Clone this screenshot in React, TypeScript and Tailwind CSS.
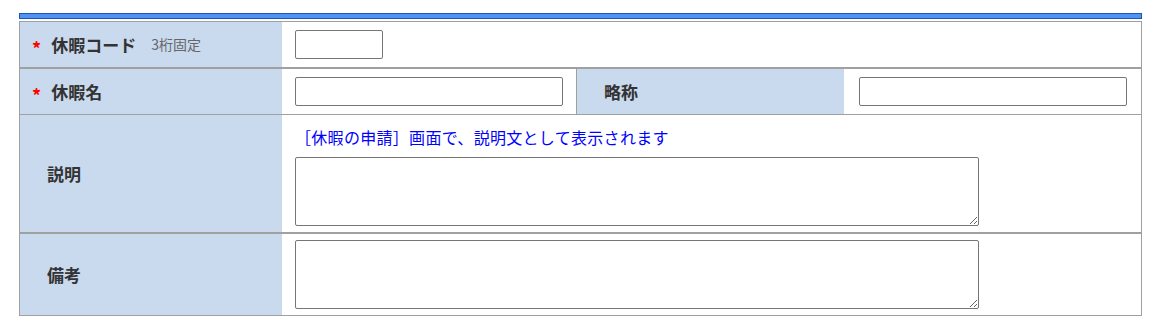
import React from "react";

const font = { fontFamily: '"Noto Sans CJK JP", "Noto Sans", sans-serif' };

function Required() {
    return <span className="text-[#ff0000] font-bold text-[18px] leading-none relative top-[3px] mr-[10px]">*</span>;
}

export default function App() {
    return (
        <div className="bg-white w-[1150px] h-[324px] pt-[13px] pl-[19px]" style={font}>
            <div className="w-[1123px] h-[6px] border border-[#1655c8] bg-[#5393f0]" />
            <div className="w-[1123px] mt-[2px] border border-[#a0a0a0] text-[#333] text-[17px]">

                <div className="flex h-[47px] border-b-2 border-[#a0a0a0]">
                    <div className="w-[262px] bg-[#c9d9ee] flex items-center pl-[12px] font-bold">
                        <Required />
                        <span>休暇コード</span>
                        <span className="ml-[15px] text-[14px] font-normal text-[#666]">3桁固定</span>
                    </div>
                    <div className="flex-1 flex items-center pl-[13px]">
                        <input className="w-[88px] h-[29px] border border-[#767676] rounded-[2px]" />
                    </div>
                </div>

                <div className="flex h-[46px] border-b border-[#a0a0a0]">
                    <div className="w-[262px] bg-[#c9d9ee] flex items-center pl-[12px] font-bold">
                        <Required />
                        <span>休暇名</span>
                    </div>
                    <div className="w-[295px] flex items-center pl-[13px] border-r border-[#a0a0a0]">
                        <input className="w-[268px] h-[29px] border border-[#767676] rounded-[2px]" />
                    </div>
                    <div className="w-[267px] bg-[#c9d9ee] flex items-center pl-[27px] font-bold">略称</div>
                    <div className="flex-1 flex items-center pl-[15px]">
                        <input className="w-[268px] h-[29px] border border-[#767676] rounded-[2px]" />
                    </div>
                </div>

                <div className="flex h-[119px] border-b-2 border-[#a0a0a0]">
                    <div className="w-[262px] bg-[#c9d9ee] flex items-center pl-[27px] font-bold">説明</div>
                    <div className="flex-1 pl-[13px] pt-[10px]">
                        <div className="text-[#0000ff] text-[16px] leading-[24px] tracking-[0.3px]">［休暇の申請］画面で、説明文として表示されます</div>
                        <textarea className="block mt-[8px] w-[684px] h-[69px] border border-[#767676] rounded-[2px]" />
                    </div>
                </div>

                <div className="flex h-[81px]">
                    <div className="w-[262px] bg-[#c9d9ee] flex items-center pl-[27px] font-bold">備考</div>
                    <div className="flex-1 flex items-center pl-[13px]">
                        <textarea className="block w-[684px] h-[69px] border border-[#767676] rounded-[2px]" />
                    </div>
                </div>

            </div>
        </div>
    );
}
